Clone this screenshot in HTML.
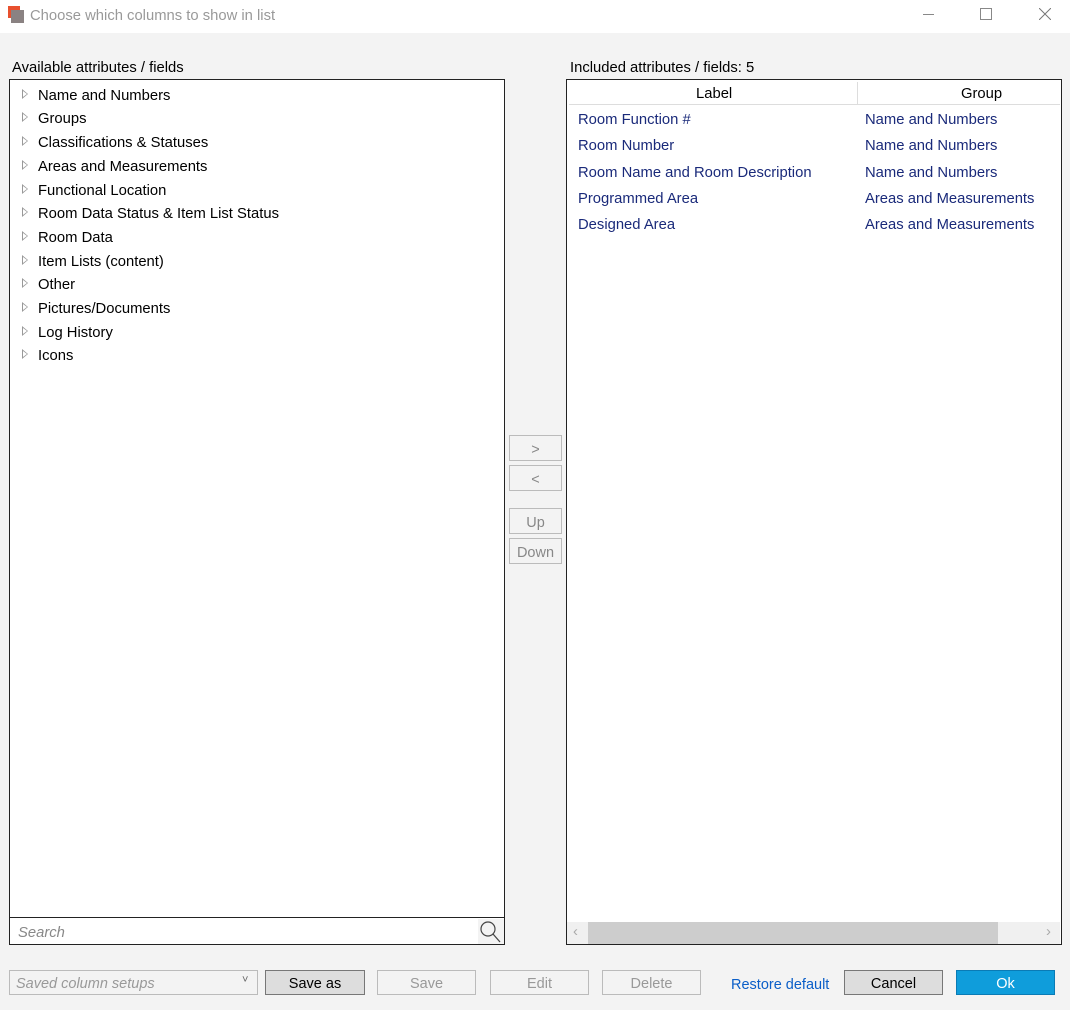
<!DOCTYPE html>
<html><head><style>
body{margin:0;width:1070px;height:1010px;background:#f3f3f3;font-family:"Liberation Sans",sans-serif;position:relative;overflow:hidden;color:#000}
.a{position:absolute}
.tb{left:0;top:0;width:1070px;height:33px;background:#fff}
.box{background:#fff;border:1px solid #222}
.t{font-size:14.8px;white-space:nowrap;margin-top:2px}
.tri{width:0;height:0;border-left:6px solid #999;border-top:5px solid transparent;border-bottom:5px solid transparent}
.tri::after{content:"";position:absolute;left:-5px;top:-3px;border-left:4px solid #fff;border-top:3px solid transparent;border-bottom:3px solid transparent}
.btn{border:1px solid #bbb;background:#f3f3f3;color:#888;font-size:14.5px;text-align:center;box-sizing:border-box;padding-top:1px}
.blue{color:#1a2a7a}
</style></head><body>
<div class="a tb"></div>
<div class="a" style="left:8px;top:6px;width:12px;height:12px;background:#e8502e"></div>
<div class="a" style="left:11px;top:10px;width:13px;height:13px;background:#8a8282"></div>
<div class="a t" style="left:30px;top:6px;color:#999">Choose which columns to show in list</div>
<div class="a" style="left:923px;top:14px;width:11px;height:1px;background:#888"></div>
<div class="a" style="left:980px;top:8px;width:10px;height:10px;border:1px solid #888"></div>
<svg class="a" style="left:1039px;top:8px" width="12" height="12"><path d="M0 0L12 12M12 0L0 12" stroke="#777" stroke-width="1"/></svg>

<div class="a t" style="left:12px;top:58px">Available attributes / fields</div>
<div class="a t" style="left:570px;top:58px">Included attributes / fields: 5</div>

<div class="a box" style="left:9px;top:79px;width:494px;height:864px"></div>
<div class="a" style="left:10px;top:917px;width:494px;height:1px;background:#222"></div>
<div class="a t" style="left:18px;top:923px;color:#888;font-style:italic">Search</div>
<svg class="a" style="left:478px;top:919px" width="26" height="25"><rect width="26" height="25" fill="#f3f3f3"/><circle cx="10" cy="10" r="7" fill="none" stroke="#444" stroke-width="1.2"/><line x1="15" y1="15" x2="22" y2="23" stroke="#444" stroke-width="1.3"/></svg>

<div class="a box" style="left:566px;top:79px;width:494px;height:864px"></div>
<div class="a" style="left:569px;top:81px;width:491px;height:23px;background:#fff;border-bottom:1px solid #ddd"></div>
<div class="a" style="left:857px;top:82px;width:1px;height:22px;background:#ddd"></div>
<div class="a t" style="left:696px;top:84px">Label</div>
<div class="a t" style="left:961px;top:84px">Group</div>
<div class="a" style="left:567px;top:922px;width:493px;height:22px;background:#f0f0f0"></div>
<div class="a" style="left:588px;top:922px;width:410px;height:22px;background:#cdcdcd"></div>
<div class="a t" style="left:573px;top:922px;color:#aaa">‹</div>
<div class="a t" style="left:1046px;top:922px;color:#aaa">›</div>

<div class="a btn" style="left:509px;top:435px;width:53px;height:26px;line-height:26px">&gt;</div>
<div class="a btn" style="left:509px;top:465px;width:53px;height:26px;line-height:26px">&lt;</div>
<div class="a btn" style="left:509px;top:508px;width:53px;height:26px;line-height:26px">Up</div>
<div class="a btn" style="left:509px;top:538px;width:53px;height:26px;line-height:26px">Down</div>

<div class="a btn" style="left:9px;top:970px;width:249px;height:25px;line-height:25px;text-align:left;padding-left:6px;font-style:italic;color:#999">Saved column setups</div>
<div class="a t" style="left:242px;top:972px;font-size:11px;color:#666">˅</div>
<div class="a btn" style="left:265px;top:970px;width:100px;height:25px;line-height:25px;background:#ddd;border-color:#777;color:#000">Save as</div>
<div class="a btn" style="left:377px;top:970px;width:99px;height:25px;line-height:25px;color:#999">Save</div>
<div class="a btn" style="left:490px;top:970px;width:99px;height:25px;line-height:25px;color:#999">Edit</div>
<div class="a btn" style="left:602px;top:970px;width:99px;height:25px;line-height:25px;color:#999">Delete</div>
<div class="a t" style="left:731px;top:975px;color:#0a5ec8;font-size:14.5px">Restore default</div>
<div class="a btn" style="left:844px;top:970px;width:99px;height:25px;line-height:25px;background:#ddd;border-color:#777;color:#000">Cancel</div>
<div class="a btn" style="left:956px;top:970px;width:99px;height:25px;line-height:25px;background:#0f9ddb;border-color:#0a7bb5;color:#fff">Ok</div>

<div class="a t" style="left:38px;top:86px">Name and Numbers</div>
<div class="a t" style="left:38px;top:109px">Groups</div>
<div class="a t" style="left:38px;top:133px">Classifications &amp; Statuses</div>
<div class="a t" style="left:38px;top:157px">Areas and Measurements</div>
<div class="a t" style="left:38px;top:181px">Functional Location</div>
<div class="a t" style="left:38px;top:204px">Room Data Status &amp; Item List Status</div>
<div class="a t" style="left:38px;top:228px">Room Data</div>
<div class="a t" style="left:38px;top:252px">Item Lists (content)</div>
<div class="a t" style="left:38px;top:275px">Other</div>
<div class="a t" style="left:38px;top:299px">Pictures/Documents</div>
<div class="a t" style="left:38px;top:323px">Log History</div>
<div class="a t" style="left:38px;top:346px">Icons</div>
<div class="a tri" style="left:22px;top:89px"></div>
<div class="a tri" style="left:22px;top:112px"></div>
<div class="a tri" style="left:22px;top:136px"></div>
<div class="a tri" style="left:22px;top:160px"></div>
<div class="a tri" style="left:22px;top:184px"></div>
<div class="a tri" style="left:22px;top:207px"></div>
<div class="a tri" style="left:22px;top:231px"></div>
<div class="a tri" style="left:22px;top:255px"></div>
<div class="a tri" style="left:22px;top:278px"></div>
<div class="a tri" style="left:22px;top:302px"></div>
<div class="a tri" style="left:22px;top:326px"></div>
<div class="a tri" style="left:22px;top:349px"></div>

<div class="a t blue" style="left:578px;top:110px">Room Function #</div>
<div class="a t blue" style="left:578px;top:136px">Room Number</div>
<div class="a t blue" style="left:578px;top:163px">Room Name and Room Description</div>
<div class="a t blue" style="left:578px;top:189px">Programmed Area</div>
<div class="a t blue" style="left:578px;top:215px">Designed Area</div>
<div class="a t blue" style="left:865px;top:110px">Name and Numbers</div>
<div class="a t blue" style="left:865px;top:136px">Name and Numbers</div>
<div class="a t blue" style="left:865px;top:163px">Name and Numbers</div>
<div class="a t blue" style="left:865px;top:189px">Areas and Measurements</div>
<div class="a t blue" style="left:865px;top:215px">Areas and Measurements</div>
</body></html>
